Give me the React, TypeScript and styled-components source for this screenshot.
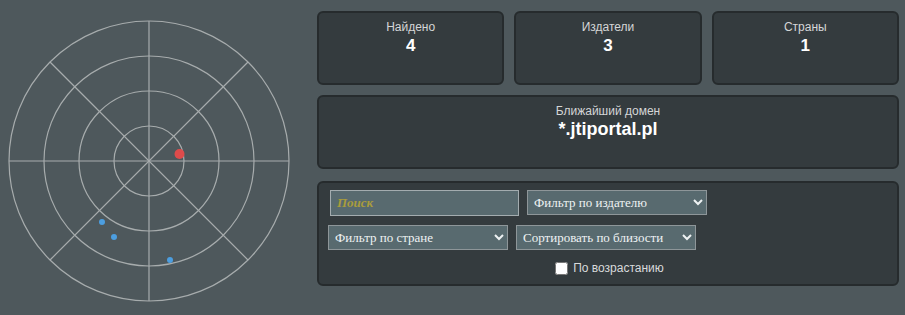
import React from 'react';
import styled, { createGlobalStyle } from 'styled-components';

const GlobalStyle = createGlobalStyle`
  body {
    margin: 0;
    background-color: #4e585c;
    font-family: "Liberation Sans", Arial, sans-serif;
  }
`;

const Page = styled.div`
  display: flex;
  width: 905px;
  height: 315px;
  box-sizing: border-box;
`;

const RadarColumn = styled.div`
  width: 317px;
  flex-shrink: 0;
`;

const Panel = styled.div`
  display: flex;
  flex-direction: column;
  width: 582px;
  padding-top: 11px;
`;

const StatsRow = styled.div`
  display: grid;
  grid-template-columns: repeat(3, 1fr);
  gap: 10px;
  margin-bottom: 10px;
`;

interface CardProps {
  height: number
}

const Card = styled.div<CardProps>`
  box-sizing: border-box;
  height: ${props => props.height}px;
  background-color: #343b3e;
  border: 2px solid #262b2d;
  border-radius: 6px;
  text-align: center;
`;

const DomainCard = styled(Card)`
  margin-bottom: 12px;
`;

const Label = styled.div`
  padding-top: 7px;
  font-size: 12px;
  line-height: 15px;
  color: #d4d6d7;
`;

interface ValueProps {
  size: number
}

const Value = styled.div<ValueProps>`
  font-size: ${props => props.size}px;
  font-weight: bold;
  line-height: 21px;
  color: #ffffff;
`;

const FilterCard = styled(Card)`
  padding: 7px 0 0 9px;
`;

const Row = styled.div`
  display: flex;
  gap: 8px;
  margin-bottom: 9px;
`;

const SearchInput = styled.input`
  box-sizing: border-box;
  width: 189px;
  height: 26px;
  margin-left: 2px;
  padding: 0 6px;
  background-color: #586a6f;
  border: 1px solid #a3acaf;
  outline: none;
  font-family: "Liberation Serif", "Times New Roman", serif;
  font-size: 13px;
  color: #eee;

  &::placeholder {
    color: #a99c3c;
    font-style: italic;
    font-weight: bold;
    opacity: 1;
  }
`;

const Select = styled.select`
  box-sizing: border-box;
  width: 180px;
  height: 25px;
  padding: 0 2px;
  background-color: #586a6f;
  border: 1px solid #8e9699;
  border-radius: 0;
  font-family: "Liberation Serif", "Times New Roman", serif;
  font-size: 13px;
  color: #eef2f3;
  outline: none;
`;

const CheckRow = styled.label`
  display: flex;
  justify-content: center;
  align-items: center;
  gap: 5px;
  padding-top: 2px;
  margin-left: -6px;
  font-size: 12px;
  color: #d8dadb;
`;

const Checkbox = styled.input`
  width: 13px;
  height: 13px;
  margin: 0;
`;

const dots = [
  { x: 102, y: 222 },
  { x: 114, y: 237 },
  { x: 170, y: 260 },
];

function Radar() {
  const cx = 149;
  const cy = 161;
  const r = 140;
  const d = r * Math.SQRT1_2;
  return (
    <svg width="317" height="315" viewBox="0 0 317 315">
      <g stroke="#a7acad" strokeWidth="1.2" fill="none">
        {[35, 70, 105, 140].map(rr => (
          <circle key={rr} cx={cx} cy={cy} r={rr} />
        ))}
        <line x1={cx - r} y1={cy} x2={cx + r} y2={cy} />
        <line x1={cx} y1={cy - r} x2={cx} y2={cy + r} />
        <line x1={cx - d} y1={cy - d} x2={cx + d} y2={cy + d} />
        <line x1={cx - d} y1={cy + d} x2={cx + d} y2={cy - d} />
      </g>
      <circle cx={179.5} cy={154} r={5} fill="#de4b4b" />
      {dots.map((p, i) => (
        <circle key={i} cx={p.x} cy={p.y} r={3} fill="#4c9ee0" />
      ))}
    </svg>
  );
}

export default function App() {
  return (
    <Page>
      <GlobalStyle />
      <RadarColumn>
        <Radar />
      </RadarColumn>
      <Panel>
        <StatsRow>
          <Card height={74}>
            <Label>Найдено</Label>
            <Value size={17}>4</Value>
          </Card>
          <Card height={74}>
            <Label>Издатели</Label>
            <Value size={17}>3</Value>
          </Card>
          <Card height={74}>
            <Label>Страны</Label>
            <Value size={17}>1</Value>
          </Card>
        </StatsRow>
        <DomainCard height={74}>
          <Label>Ближайший домен</Label>
          <Value size={18}>*.jtiportal.pl</Value>
        </DomainCard>
        <FilterCard height={105}>
          <Row>
            <SearchInput placeholder="Поиск" />
            <Select defaultValue="">
              <option value="">Фильтр по издателю</option>
            </Select>
          </Row>
          <Row>
            <Select defaultValue="">
              <option value="">Фильтр по стране</option>
            </Select>
            <Select defaultValue="near">
              <option value="near">Сортировать по близости</option>
            </Select>
          </Row>
          <CheckRow>
            <Checkbox type="checkbox" />
            По возрастанию
          </CheckRow>
        </FilterCard>
      </Panel>
    </Page>
  );
}
